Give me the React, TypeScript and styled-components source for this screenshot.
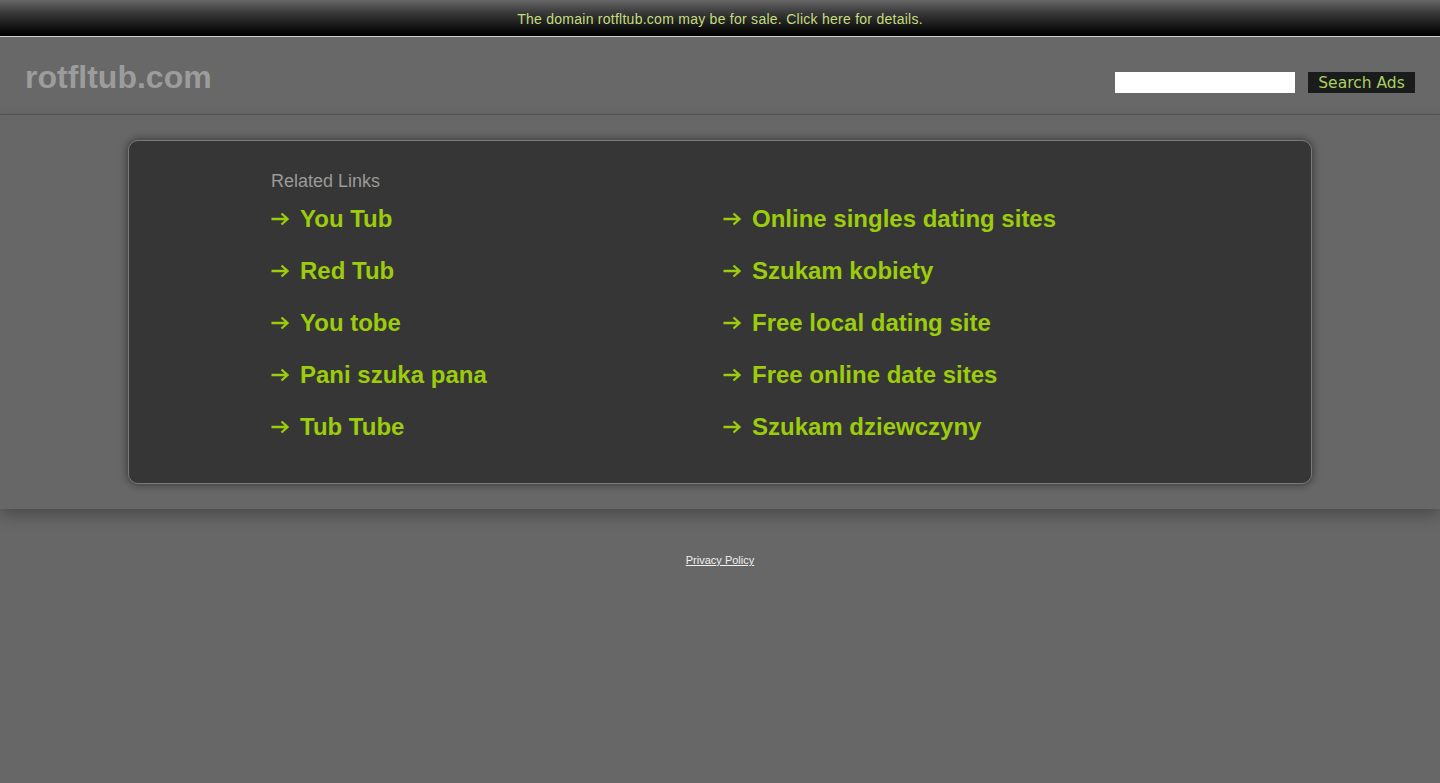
import * as React from "react";
import styled, { createGlobalStyle } from "styled-components";

const GlobalStyle = createGlobalStyle`
    html, body {
        margin: 0;
        padding: 0;
        background: #676767;
        font-family: "Liberation Sans", Arial, sans-serif;
    }
`

const TopBar = styled.div`
    height: 36px;
    display: flex;
    align-items: center;
    justify-content: center;
    background: linear-gradient(to bottom, #666666 0%, #3a3a3a 35%, #0a0a0a 85%, #000 100%);
    border-bottom: 1px solid #cfcfcf;
`

const TopLink = styled.a`
    color: #c4de7e;
    font-size: 14px;
    letter-spacing: 0.26px;
    line-height: 36px;
    padding-top: 2px;
    text-decoration: none;
`

const Header = styled.header`
    height: 77px;
    display: flex;
    align-items: flex-start;
    justify-content: space-between;
    padding: 0 25px;
    border-bottom: 1px solid #555555;
    background: #686868;
`

const Logo = styled.div`
    margin-top: 24px;
    font-size: 32px;
    line-height: 32px;
    font-weight: bold;
    color: #9c9c9c;
`

const SearchForm = styled.form`
    margin-top: 35px;
    display: flex;
    gap: 13px;
`

const SearchInput = styled.input`
    width: 180px;
    height: 21px;
    box-sizing: border-box;
    border: none;
    background: #fff;
    margin: 0;
    padding: 0 4px;
`

const SearchButton = styled.button`
    width: 107px;
    height: 21px;
    border: none;
    margin: 0;
    padding: 2px 0 0;
    background: #1a1b1b;
    color: #a9d161;
    font-family: "DejaVu Sans", sans-serif;
    font-size: 15.5px;
    line-height: 19px;
`

const Main = styled.main`
    position: relative;
    z-index: 1;
    padding: 25px 0;
    background: #676767;
    box-shadow: 0 6px 14px rgba(0, 0, 0, 0.28);
`

const Card = styled.section`
    margin: 0 auto;
    box-sizing: content-box;
    background: #363636;
    border: 1px solid #7a7a7a;
    border-radius: 10px;
    box-shadow: 0 0 9px rgba(0, 0, 0, 0.55);
    padding: 29px 0 30px 142px;
    width: 1040px;
`

const Heading = styled.div`
    color: #9a9a9a;
    font-size: 18px;
    line-height: 22px;
`

const LinkGrid = styled.div`
    display: grid;
    grid-template-columns: 452px 452px;
    padding-top: 1px;
`

const LinkRow = styled.a`
    display: flex;
    align-items: center;
    gap: 11px;
    height: 52px;
    color: #9ccc0c;
    font-size: 24px;
    font-weight: bold;
    text-decoration: none;
`

const Footer = styled.footer`
    padding-top: 41px;
    text-align: center;
`

const PrivacyLink = styled.a`
    color: #f0f0f0;
    font-size: 11px;
    line-height: 13px;
    text-decoration: underline;
`

const Arrow = () => (
    <svg width="18" height="14" viewBox="0 0 18 14">
        <path d="M0.5 7 H16.5 M10.5 1.5 L16.5 7 L10.5 12.5" fill="none" stroke="#9ccc0c" strokeWidth="2.3" />
    </svg>
)

const left = ["You Tub", "Red Tub", "You tobe", "Pani szuka pana", "Tub Tube"];
const right = ["Online singles dating sites", "Szukam kobiety", "Free local dating site", "Free online date sites", "Szukam dziewczyny"];

export default function App() {
    let links: string[] = [];
    left.forEach(function(l, i) {
        links.push(l);
        links.push(right[i]);
    });
    return (
        <>
            <GlobalStyle />
            <TopBar>
                <TopLink href="#">The domain rotfltub.com may be for sale. Click here for details.</TopLink>
            </TopBar>
            <Header>
                <Logo>rotfltub.com</Logo>
                <SearchForm onSubmit={(e) => e.preventDefault()}>
                    <SearchInput type="text" />
                    <SearchButton type="submit">Search Ads</SearchButton>
                </SearchForm>
            </Header>
            <Main>
                <Card>
                    <Heading>Related Links</Heading>
                    <LinkGrid>
                        {links.map(function(text, index) {
                            return (
                                <LinkRow href="#" key={index}>
                                    <Arrow />
                                    {text}
                                </LinkRow>
                            )
                        })}
                    </LinkGrid>
                </Card>
            </Main>
            <Footer>
                <PrivacyLink href="#">Privacy Policy</PrivacyLink>
            </Footer>
        </>
    )
}
